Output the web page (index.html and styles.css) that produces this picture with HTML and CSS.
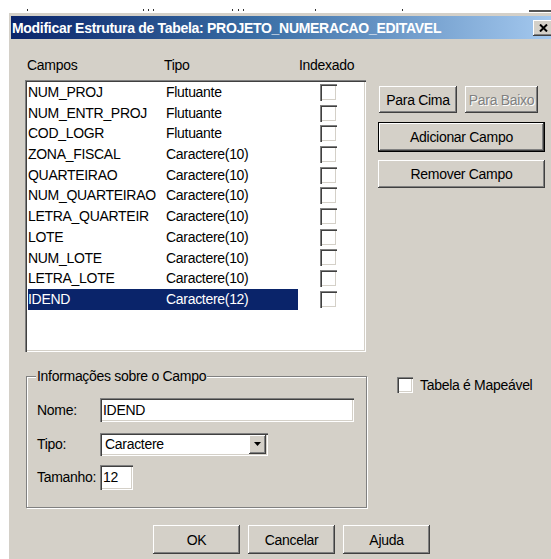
FILE: index.html
```html
<!DOCTYPE html>
<html lang="pt">
<head>
<meta charset="utf-8">
<title>Modificar Estrutura de Tabela</title>
<link rel="stylesheet" href="styles.css">
</head>
<body>
<div class="ruler">
  <span class="tick" style="left:27px"></span>
  <span class="tick" style="left:143px"></span>
  <span class="tick" style="left:148px"></span>
  <span class="tick" style="left:153px"></span>
  <span class="tick" style="left:232px"></span>
  <span class="tick" style="left:238px"></span>
  <span class="tick" style="left:243px"></span>
  <span class="tick" style="left:315px"></span>
  <span class="tick" style="left:402px"></span>
  <span class="tick-line"></span>
</div>
<div class="dialog">
  <div class="titlebar">
    <span class="title">Modificar Estrutura de Tabela: PROJETO_NUMERACAO_EDITAVEL</span>
    <button class="close" type="button" aria-label="Fechar">
      <svg width="9" height="8" viewBox="0 0 9 8"><path d="M1 0.5 L8 7.5 M8 0.5 L1 7.5" stroke="#000" stroke-width="2" fill="none"/></svg>
    </button>
  </div>
  <div class="content">
    <div class="top">
      <div class="fields">
        <div class="heads">
          <span class="h-campos">Campos</span>
          <span class="h-tipo">Tipo</span>
          <span class="h-idx">Indexado</span>
        </div>
        <div class="list">
          <div class="row"><div class="sel-area"><span class="name">NUM_PROJ</span><span class="type">Flutuante</span></div><span class="chk"></span></div>
          <div class="row"><div class="sel-area"><span class="name">NUM_ENTR_PROJ</span><span class="type">Flutuante</span></div><span class="chk"></span></div>
          <div class="row"><div class="sel-area"><span class="name">COD_LOGR</span><span class="type">Flutuante</span></div><span class="chk"></span></div>
          <div class="row"><div class="sel-area"><span class="name">ZONA_FISCAL</span><span class="type">Caractere(10)</span></div><span class="chk"></span></div>
          <div class="row"><div class="sel-area"><span class="name">QUARTEIRAO</span><span class="type">Caractere(10)</span></div><span class="chk"></span></div>
          <div class="row"><div class="sel-area"><span class="name">NUM_QUARTEIRAO</span><span class="type">Caractere(10)</span></div><span class="chk"></span></div>
          <div class="row"><div class="sel-area"><span class="name">LETRA_QUARTEIR</span><span class="type">Caractere(10)</span></div><span class="chk"></span></div>
          <div class="row"><div class="sel-area"><span class="name">LOTE</span><span class="type">Caractere(10)</span></div><span class="chk"></span></div>
          <div class="row"><div class="sel-area"><span class="name">NUM_LOTE</span><span class="type">Caractere(10)</span></div><span class="chk"></span></div>
          <div class="row"><div class="sel-area"><span class="name">LETRA_LOTE</span><span class="type">Caractere(10)</span></div><span class="chk"></span></div>
          <div class="row selected"><div class="sel-area"><span class="name">IDEND</span><span class="type">Caractere(12)</span></div><span class="chk"></span></div>
        </div>
      </div>
      <div class="side">
        <div class="side-pair">
          <button class="btn btn-up" type="button">Para Cima</button>
          <button class="btn btn-down" type="button" disabled>Para Baixo</button>
        </div>
        <button class="btn btn-wide btn-default" type="button">Adicionar Campo</button>
        <button class="btn btn-wide btn-remove" type="button">Remover Campo</button>
      </div>
    </div>

    <div class="mid">
      <div class="group">
        <span class="legend">Informações sobre o Campo</span>
        <div class="frow">
          <span class="flabel">Nome:</span>
          <span class="field field-name">IDEND</span>
        </div>
        <div class="frow frow-tipo">
          <span class="flabel">Tipo:</span>
          <span class="field field-select">Caractere
            <span class="drop"><svg width="7" height="4" viewBox="0 0 7 4"><path d="M0 0 H7 L3.5 4 Z" fill="#000"/></svg></span>
          </span>
        </div>
        <div class="frow frow-size">
          <span class="flabel">Tamanho:</span>
          <span class="field field-size">12</span>
        </div>
      </div>
      <div class="mapcheck">
        <span class="chk chk-map"></span>
        <span>Tabela é Mapeável</span>
      </div>
    </div>

    <div class="actions">
      <button class="btn btn-act" type="button">OK</button>
      <button class="btn btn-act" type="button">Cancelar</button>
      <button class="btn btn-act" type="button">Ajuda</button>
    </div>
  </div>
</div>
</body>
</html>
```
FILE: styles.css
```css
* {
  box-sizing: border-box;
}

html,
body {
  margin: 0;
  padding: 0;
}

body {
  width: 551px;
  height: 559px;
  overflow: hidden;
  background: #fff;
  font-family: "Liberation Sans", Arial, sans-serif;
  font-size: 14px;
  letter-spacing: -0.3px;
  color: #000;
}

/* ruler strip of the document behind the dialog */
.ruler {
  position: relative;
  height: 13px;
}

.tick {
  position: absolute;
  top: 9px;
  width: 1px;
  height: 2px;
  background: #333;
}

.tick-line {
  position: absolute;
  left: 529px;
  top: 10px;
  width: 22px;
  height: 2px;
  background: #555;
}

/* dialog window */
.dialog {
  margin-left: 9px;
  width: 547px;
  height: 546px;
  padding: 3px 0 0 2px;
  background: #d4d0c8;
}

.titlebar {
  display: flex;
  align-items: center;
  height: 23px;
  padding-left: 1px;
  background: linear-gradient(to right, #0a246a 0%, #3a6ea5 45%, #a6caf0 100%);
  color: #fff;
  font-weight: bold;
  font-size: 14px;
}

.title {
  white-space: nowrap;
}

.close {
  display: flex;
  align-items: center;
  justify-content: center;
  margin-left: auto;
  margin-right: 2px;
  width: 21px;
  height: 16px;
  padding: 0;
  border: none;
  background: #d4d0c8;
  box-shadow: inset -1px -1px #404040, inset 1px 1px #fff, inset -2px -2px #808080;
}

.content {
  padding: 18px 0 0 14px;
}

/* raised push buttons */
.btn {
  display: flex;
  align-items: center;
  justify-content: center;
  padding: 0;
  border: none;
  background: #d4d0c8;
  font-family: inherit;
  font-size: 14px;
  letter-spacing: -0.3px;
  color: #000;
  white-space: nowrap;
  box-shadow: inset -1px -1px #404040, inset 1px 1px #fff, inset -2px -2px #808080;
}

.btn:disabled {
  color: #808080;
  text-shadow: 1px 1px 0 #fff;
}

/* sunken well: list, inputs, check boxes */
.list,
.field,
.chk {
  background: #fff;
  box-shadow: inset 1px 1px #808080, inset 2px 2px #404040, inset -1px -1px #fff, inset -2px -2px #d4d0c8;
}

.top {
  display: flex;
}

.fields {
  width: 341px;
}

.heads {
  display: flex;
  height: 16px;
  line-height: 16px;
}

.h-campos {
  width: 139px;
  padding-left: 2px;
}

.h-tipo {
  width: 135px;
}

.list {
  margin-top: 7px;
  height: 272px;
  padding: 2px;
}

.row {
  display: flex;
  align-items: center;
  height: 20.7px;
  padding-left: 1px;
}

.sel-area {
  display: flex;
  width: 270px;
  height: 100%;
  line-height: 20.7px;
}

.row.selected .sel-area {
  background: #0a246a;
  color: #fff;
}

.name {
  width: 138px;
  white-space: nowrap;
}

.chk {
  display: block;
  margin-left: 22px;
  width: 17px;
  height: 17px;
}

.side {
  display: flex;
  flex-direction: column;
  width: 167px;
  margin-left: 12px;
  margin-top: 29px;
}

.side-pair {
  display: flex;
  gap: 8px;
  padding-left: 1px;
}

.btn-up {
  width: 78px;
  height: 27px;
}

.btn-down {
  width: 73px;
  height: 27px;
}

.btn-wide {
  width: 167px;
}

.btn-default {
  margin-top: 9px;
  height: 30px;
  box-shadow: inset 0 0 0 1px #000, inset -2px -2px #404040, inset 2px 2px #fff, inset -3px -3px #808080;
}

.btn-remove {
  margin-top: 8px;
  height: 28px;
}

/* field details group */
.mid {
  display: flex;
  margin-top: 24px;
}

.group {
  position: relative;
  margin-left: 1px;
  width: 341px;
  height: 132px;
  padding: 21px 0 0 10px;
  border: 1px solid #808080;
  box-shadow: inset 1px 1px #fff, 1px 1px #fff;
}

.legend {
  position: absolute;
  left: 9px;
  top: -9px;
  padding: 0 1px;
  background: #d4d0c8;
  line-height: 16px;
}

.frow {
  display: flex;
  align-items: center;
  height: 24px;
}

.frow-tipo {
  margin-top: 10px;
}

.frow-size {
  margin-top: 9px;
}

.flabel {
  width: 63px;
  white-space: nowrap;
}

.field {
  display: flex;
  align-items: center;
  position: relative;
  height: 24px;
  padding-left: 3px;
}

.field-name {
  width: 254px;
}

.field-select {
  width: 168px;
  height: 23px;
  padding-left: 5px;
}

.field-size {
  width: 33px;
  height: 25px;
}

.drop {
  position: absolute;
  right: 2px;
  top: 2px;
  display: flex;
  align-items: center;
  justify-content: center;
  width: 17px;
  height: 19px;
  background: #d4d0c8;
  box-shadow: inset -1px -1px #404040, inset 1px 1px #fff, inset -2px -2px #808080;
}

.mapcheck {
  display: flex;
  align-items: center;
  gap: 7px;
  margin-left: 30px;
  margin-top: 1px;
  height: 16px;
  white-space: nowrap;
}

.chk-map {
  margin-left: 0;
  width: 16px;
  height: 16px;
}

.actions {
  display: flex;
  gap: 8px;
  margin-top: 17px;
  margin-left: 128px;
}

.btn-act {
  width: 87px;
  height: 29px;
}
```
